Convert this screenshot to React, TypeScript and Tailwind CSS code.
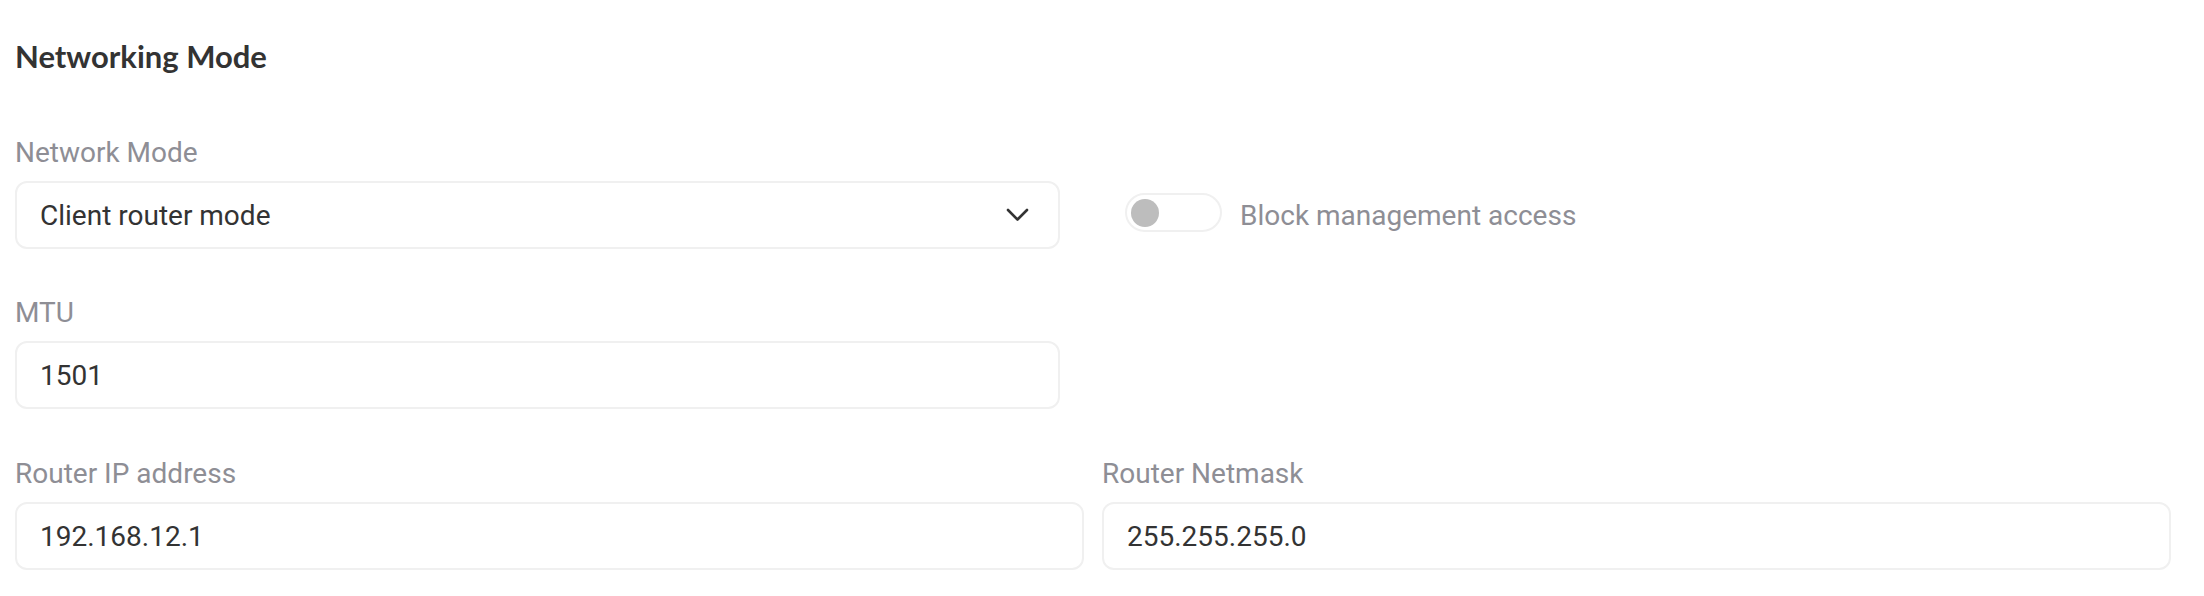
import React, { useState } from 'react';

const labelCls = "block text-[28px] leading-[33px] text-[#8e8e95] mb-3";
const boxCls =
  "h-[68px] rounded-[12px] border-2 border-[#f0f0f0] bg-white flex items-center px-[23px] text-[28px] leading-[33px] text-[#333333]";

interface FieldProps {
  label: string;
  value: string;
  className?: string;
}

const Field: React.FC<FieldProps> = ({ label, value, className = '' }) => (
  <div className={className}>
    <label className={labelCls}>{label}</label>
    <div className={boxCls}>{value}</div>
  </div>
);

export default function App() {
  const [blocked, setBlocked] = useState(false);

  return (
    <div
      className="w-[2204px] h-[596px] bg-white pl-[15px] pt-[37px]"
      style={{ fontFamily: 'Roboto, "Liberation Sans", sans-serif' }}
    >
      <h2 className="font-['Lato',sans-serif] font-bold text-[31px] leading-[38px] text-[#333333]">
        Networking Mode
      </h2>

      {/* network mode + toggle */}
      <div className="mt-[61px]">
        <label className={labelCls}>Network Mode</label>
        <div className="flex items-center">
          <div className={`${boxCls} w-[1045px] justify-between pr-[29px]`}>
            <span>Client router mode</span>
            <svg width="23" height="14" viewBox="0 0 23 14" fill="none">
              <path
                d="M2 2l9.5 9.5L21 2"
                stroke="#333333"
                strokeWidth="2.6"
                strokeLinecap="round"
                strokeLinejoin="round"
              />
            </svg>
          </div>

          <div className="flex items-center ml-[65px]">
            <button
              onClick={() => setBlocked(!blocked)}
              className={`w-[97px] h-[39px] mb-[5px] rounded-full border-2 border-[#f0f0f0] bg-white flex items-center px-[4px] ${
                blocked ? 'justify-end' : 'justify-start'
              }`}
            >
              <span className="w-[28px] h-[28px] rounded-full bg-[#bdbdbd]" />
            </button>
            <span className="ml-[18px] text-[28px] leading-[33px] text-[#8e8e95]">
              Block management access
            </span>
          </div>
        </div>
      </div>

      <Field label="MTU" value="1501" className="mt-[47px] w-[1045px]" />

      <div className="mt-[48px] w-[2156px] grid grid-cols-2 gap-[18px]">
        <Field label="Router IP address" value="192.168.12.1" />
        <Field label="Router Netmask" value="255.255.255.0" />
      </div>
    </div>
  );
}
